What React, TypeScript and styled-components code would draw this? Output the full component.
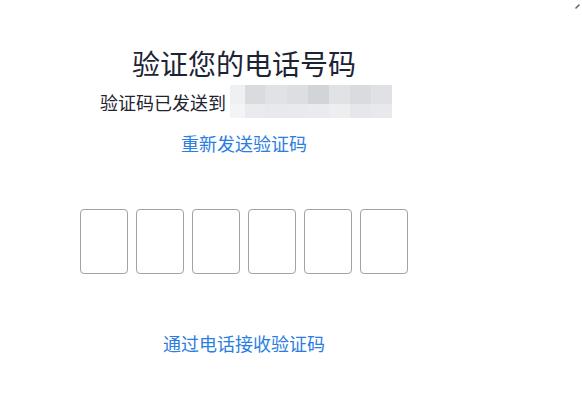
import React from 'react';
import styled, {createGlobalStyle} from 'styled-components';

const GlobalStyle = createGlobalStyle`
  html, body {
    margin: 0;
    padding: 0;
    background: #ffffff;
  }
  body {
    font-family: 'Noto Sans CJK SC', 'Noto Sans', sans-serif;
  }
`;

const Page = styled.div`
  position: relative;
  width: 582px;
  height: 411px;
  overflow: hidden;
  background: #ffffff;
`;

const Column = styled.div`
  width: 488px;
  display: flex;
  flex-direction: column;
  align-items: center;
  padding-top: 46px;
`;

const Title = styled.h1`
  margin: 0;
  font-size: 28px;
  line-height: 34px;
  font-weight: 400;
  color: #1c2434;
  letter-spacing: 0;
`;

const SentRow = styled.div`
  display: flex;
  align-items: center;
  gap: 4px;
  height: 33px;
  margin-top: 5px;
  margin-left: 4px;
`;

const SentText = styled.span`
  font-size: 18px;
  line-height: 24px;
  color: #1f2430;
`;

const Mosaic = styled.div`
  display: grid;
  grid-template-columns: 15px 20px 22px 21px 21px 21px 21px 21px;
  grid-template-rows: 19px 14px;
  width: 162px;
  height: 33px;
`;

const MosaicCell = styled.div<{$shade: string}>`
  background: ${props => props.$shade};
`;

const LinkText = styled.a<{$gap: number}>`
  margin-top: ${props => props.$gap}px;
  font-size: 18px;
  line-height: 24px;
  color: #2a7de1;
  text-decoration: none;
  cursor: pointer;
`;

const CodeRow = styled.div`
  display: flex;
  gap: 8px;
  margin-top: 54px;
`;

const CodeBox = styled.input`
  box-sizing: border-box;
  width: 48px;
  height: 65px;
  border: 1.5px solid #a3a3a3;
  border-radius: 4px;
  background: #ffffff;
  padding: 0;
  outline: none;
  font-size: 28px;
  text-align: center;
  font-family: inherit;
`;

const CornerMark = styled.svg`
  position: absolute;
  top: 4px;
  right: 2px;
`;

const topShades = [
  '#eef0f2',
  '#d9dbdf',
  '#e0e2e5',
  '#dcdee1',
  '#d2d5d8',
  '#e0e2e5',
  '#d9dbdf',
  '#dfe1e4',
];
const bottomShades = [
  '#f3f4f6',
  '#eaebee',
  '#e8e9ec',
  '#e9eaed',
  '#eaebee',
  '#eceef0',
  '#e6e7ea',
  '#e8e9ec',
];

export default function App() {
  return (
    <Page>
      <GlobalStyle />
      <Column>
        <Title>验证您的电话号码</Title>
        <SentRow>
          <SentText>验证码已发送到</SentText>
          <Mosaic>
            {[...topShades, ...bottomShades].map((shade, i) => (
              <MosaicCell key={i} $shade={shade} />
            ))}
          </Mosaic>
        </SentRow>
        <LinkText $gap={13}>重新发送验证码</LinkText>
        <CodeRow>
          {[0, 1, 2, 3, 4, 5].map(i => (
            <CodeBox key={i} maxLength={1} inputMode="numeric" />
          ))}
        </CodeRow>
        <LinkText $gap={57}>通过电话接收验证码</LinkText>
      </Column>
      <CornerMark width="5" height="5" viewBox="0 0 5 5">
        <path d="M1 4 L4 1" stroke="#5b6478" strokeWidth="1.6" strokeLinecap="round" />
      </CornerMark>
    </Page>
  );
}
